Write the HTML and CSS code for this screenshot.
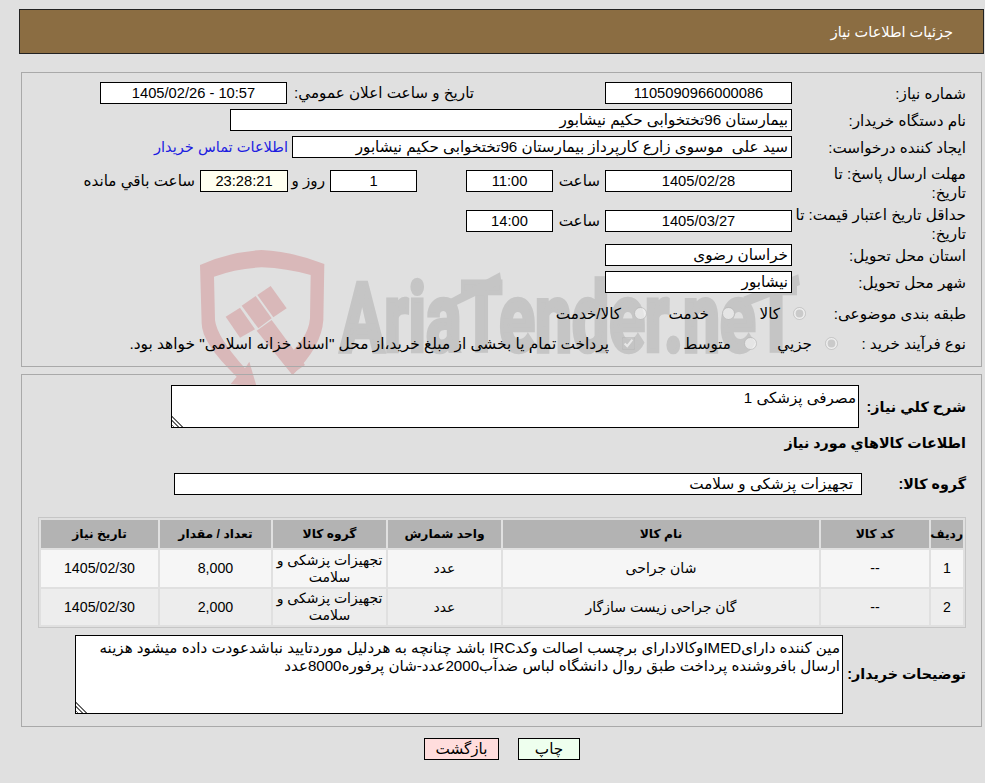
FILE: index.html
```html
<!DOCTYPE html>
<html lang="fa" dir="rtl">
<head>
<meta charset="utf-8">
<title>جزئیات اطلاعات نیاز</title>
<link rel="stylesheet" href="styles.css">
</head>
<body>
<svg class="watermark" viewBox="0 0 1860 450" aria-hidden="true">
  <g fill="#d9b8b9">
    <path d="M30 75 Q120 35 215 30 Q310 35 403 72 L400 240 Q395 320 308 405 L275 362 Q355 300 360 235 L362 105 Q290 85 215 82 Q140 85 72 110 L75 240 Q80 290 165 385 L178 365 L200 440 L122 432 L140 410 Q35 310 35 250 Z"/>
    <path d="M107 230 L150 203 L195 268 L150 293 Z"/>
    <path d="M155 197 L197 168 L245 235 L205 265 Z"/>
    <path d="M202 165 L242 138 L290 205 L250 232 Z"/>
    <path d="M200 272 L245 240 L345 375 L305 402 Z"/>
  </g>
  <text class="wm-text" x="450" y="333" textLength="1370" lengthAdjust="spacingAndGlyphs" direction="ltr">AriaTender.neT</text>
  <g fill="#c5c5c5">
    <path d="M775 180 L930 97 L935 130 L780 205 Z"/>
    <path d="M1660 170 L1825 103 L1830 135 L1665 200 Z"/>
  </g>
</svg>
<header class="title-bar">جزئیات اطلاعات نیاز</header>

<section class="panel panel-info">
  <div class="row">
    <div class="label">شماره نیاز:</div>
    <div class="field f-main num">1105090966000086</div>
    <div class="label-inline announce">تاریخ و ساعت اعلان عمومي:</div>
    <div class="field f-announce num">10:57 - 1405/02/26</div>
  </div>
  <div class="row">
    <div class="label">نام دستگاه خریدار:</div>
    <div class="field f-buyer">بیمارستان 96تختخوابی حکیم نیشابور</div>
  </div>
  <div class="row">
    <div class="label">ایجاد کننده درخواست:</div>
    <div class="field f-creator">سید علی  موسوی زارع کارپرداز بیمارستان 96تختخوابی حکیم نیشابور</div>
    <a class="contact" href="#">اطلاعات تماس خریدار</a>
  </div>
  <div class="row row-tall row-deadline">
    <div class="label">مهلت ارسال پاسخ: تا<br>تاریخ:</div>
    <div class="field f-main num">1405/02/28</div>
    <div class="label-inline hour">ساعت</div>
    <div class="field f-time num">11:00</div>
    <div class="field f-days num">1</div>
    <div class="label-inline days">روز و</div>
    <div class="field f-remain num">23:28:21</div>
    <div class="label-inline remain">ساعت باقي مانده</div>
  </div>
  <div class="row row-tall row-validity">
    <div class="label">حداقل تاریخ اعتبار قیمت: تا<br>تاریخ:</div>
    <div class="field f-main num">1405/03/27</div>
    <div class="label-inline hour">ساعت</div>
    <div class="field f-time num">14:00</div>
  </div>
  <div class="row row-province">
    <div class="label">استان محل تحویل:</div>
    <div class="field f-main">خراسان رضوی</div>
  </div>
  <div class="row">
    <div class="label">شهر محل تحویل:</div>
    <div class="field f-main">نیشابور</div>
  </div>
  <div class="choice choice-subject">
    <div class="label">طبقه بندی موضوعی:</div>
    <label class="opt"><input type="radio" name="s" checked disabled>کالا</label>
    <label class="opt"><input type="radio" name="s" disabled>خدمت</label>
    <label class="opt"><input type="radio" name="s" disabled>کالا/خدمت</label>
  </div>
  <div class="choice choice-process">
    <div class="label">نوع فرآیند خرید :</div>
    <label class="opt"><input type="radio" name="p" checked disabled>جزیي</label>
    <label class="opt"><input type="radio" name="p" disabled>متوسط</label>
    <label class="opt opt-long"><input type="checkbox" checked disabled>پرداخت تمام یا بخشی از مبلغ خرید،از محل "اسناد خزانه اسلامی" خواهد بود.</label>
  </div>
</section>

<section class="panel panel-goods">
  <div class="row row-summary">
    <div class="label-bold l-summary">شرح کلي نیاز:</div>
    <textarea class="area area-summary" readonly>مصرفی پزشکی 1</textarea>
  </div>
  <h2 class="heading">اطلاعات کالاهاي مورد نیاز</h2>
  <div class="row row-group">
    <div class="label-bold l-group">گروه کالا:</div>
    <div class="field f-group">تجهیزات پزشکی و سلامت</div>
  </div>
  <table class="goods">
    <colgroup>
      <col class="c-idx"><col class="c-code"><col class="c-name"><col class="c-unit"><col class="c-cat"><col class="c-qty"><col class="c-date">
    </colgroup>
    <thead>
      <tr><th>ردیف</th><th>کد کالا</th><th>نام کالا</th><th>واحد شمارش</th><th>گروه کالا</th><th>تعداد / مقدار</th><th>تاریخ نیاز</th></tr>
    </thead>
    <tbody>
      <tr><td class="num">1</td><td class="num">--</td><td>شان جراحی</td><td>عدد</td><td>تجهیزات پزشکی و سلامت</td><td class="num">8,000</td><td class="num">1405/02/30</td></tr>
      <tr><td class="num">2</td><td class="num">--</td><td>گان جراحی زیست سازگار</td><td>عدد</td><td>تجهیزات پزشکی و سلامت</td><td class="num">2,000</td><td class="num">1405/02/30</td></tr>
    </tbody>
  </table>
  <div class="row row-notes">
    <div class="label-bold l-notes">توضیحات خریدار:</div>
    <textarea class="area area-notes" readonly>مین کننده دارایIMEDوکالادارای برچسب اصالت وکدIRC باشد چنانچه به هردلیل موردتایید نباشدعودت داده میشود هزینه ارسال بافروشنده پرداخت طبق روال دانشگاه لباس ضدآب2000عدد-شان پرفوره8000عدد</textarea>
  </div>
</section>

<div class="actions">
  <button class="btn btn-print" type="button">چاپ</button>
  <button class="btn btn-back" type="button">بازگشت</button>
</div>
</body>
</html>
```
FILE: styles.css
```css
* { box-sizing: border-box; }
html, body { margin: 0; height: 783px; overflow: hidden; }
body {
  position: relative;
  background: #e0e0e0;
  color: #000;
  font-family: "Liberation Sans", "DejaVu Sans", sans-serif;
  font-size: 15.2px;
  line-height: 19px;
  padding-top: 9px;
}
.watermark { position: absolute; left: 190px; top: 240px; width: 620px; height: 150px; z-index: 0; }
.wm-text { font-family: Roboto, sans-serif; font-weight: 700; font-size: 288px; fill: #c5c5c5; stroke: #c5c5c5; stroke-width: 14px; }

.title-bar {
  margin: 0 1px 0 19px;
  height: 45px;
  padding: 13px 30px 0 0;
  background: #8b6d42;
  border: 1px solid #222;
  color: #fff;
  font-size: 14.5px;
}
.panel { position: relative; z-index: 1; margin: 0 3px 0 21px; border: 1px solid #a9a9a9; }
.panel-info { margin-top: 18px; padding: 9px 15px 11px 0; height: 295px; }
.panel-goods { margin-top: 7px; padding: 10px 15px 0 0; height: 353px; }

.row { display: flex; align-items: center; margin-bottom: 5px; }
.row-tall { margin-bottom: 0; align-items: flex-start; }
.row-deadline { margin-top: -1px; margin-bottom: 1px; }
.row-tall .label { padding-top: 2px; }
.row-deadline > :not(.label) { margin-top: 8px; }
.row-validity > :not(.label) { margin-top: 7px; }
.row-province { margin-top: 1px; }

.label { width: 174px; flex: none; }
.label-inline { flex: none; line-height: 22px; white-space: nowrap; }
.label-bold { flex: none; font-weight: 700; font-size: 14.3px; }

.field {
  flex: none;
  height: 22px;
  padding: 0 3px;
  background: #fff;
  border: 1px solid #000;
  line-height: 20px;
  white-space: pre;
}
.num { font-size: 14.7px; text-align: center; }
.f-main { width: 187px; }
.f-announce { width: 187px; margin-right: 5px; }
.f-buyer { width: 562px; }
.f-creator { width: 500px; }
.f-time { width: 87px; }
.f-days { width: 87px; margin-right: 49px; }
.f-remain { width: 88px; margin-right: 9px; background: #fffff0; }
.f-group { width: 688px; padding-right: 8px; }

.announce { margin-right: 131px; width: 182px; }
.hour { margin-right: 5px; width: 47px; }
.days { width: 28px; margin-right: 5px; }
.remain { margin-right: 5px; }
.contact { margin-right: 4px; color: #1c1ce0; text-decoration: none; font-size: 14.6px; }

.choice { display: grid; align-items: center; height: 22px; }
.choice .label { width: auto; }
.choice-subject { margin-top: 9px; grid-template-columns: 160px 71px 88px auto; }
.choice-process { margin-top: 8px; grid-template-columns: 128px 81px 122px auto; }
.opt { display: flex; align-items: center; white-space: nowrap; }
.opt input { flex: none; width: 13px; height: 13px; margin: 0 0 0 13px; }
.opt-long { font-size: 15.4px; }

.row-summary { margin-bottom: 0; }
.l-summary { width: 107px; padding-top: 1px; }
.l-group { width: 104px; }
.l-notes { width: 123px; }
.heading { margin: 6px 0 0; font-size: 14.3px; line-height: 19px; font-weight: 700; }
.row-group { margin: 20px 0 0; }

.area {
  display: block;
  flex: none;
  background: #fff;
  border: 1px solid #000;
  border-radius: 0;
  outline: 0;
  font: inherit;
  font-size: 15.1px;
  line-height: 18px;
  color: #000;
  overflow: hidden;
}
.area::-webkit-resizer {
  background: linear-gradient(45deg, transparent 0 1px, #666 1px 2px, transparent 2px 4px, #666 4px 5px, transparent 5px 7px, #666 7px 8px, transparent 8px);
}
.area-summary { width: 688px; height: 43px; padding: 3px 2px; }
.area-notes { width: 768px; height: 79px; padding: 3px 2px; }

.goods {
  display: table;
  width: 928px;
  margin: 22px 0 0 0;
  table-layout: fixed;
  border-collapse: separate;
  border-spacing: 2px;
  border: 1px solid #c6c6c6;
  font-size: 14px;
  line-height: 17px;
}
.c-idx { width: 32px; } .c-code { width: 108px; } .c-name { width: 316px; } .c-unit { width: 113px; }
.c-cat { width: 113px; } .c-qty { width: 111px; } .c-date { width: 117px; }
.goods th { height: 28px; padding: 0; background: #b3b3b3; font-size: 12.3px; font-weight: 700; }
.goods td { height: 37px; padding: 0 2px; text-align: center; }
.goods td.num { font-size: 14.2px; }
.goods tbody tr:nth-child(1) td { background: #f6f6f6; }
.goods tbody tr:nth-child(2) td { background: #ededed; height: 36px; }
.row-notes { margin: 7px 0 0; }

.actions { position: relative; z-index: 1; display: flex; justify-content: center; gap: 19px; margin-top: 11px; padding-left: 19px; }
.btn {
  height: 22px;
  padding: 0;
  border: 1px solid #000;
  border-radius: 0;
  font: inherit;
  line-height: 20px;
  color: #000;
}
.btn-print { width: 62px; background: #eeffee; }
.btn-back { width: 75px; background: #ffdddd; }
```
